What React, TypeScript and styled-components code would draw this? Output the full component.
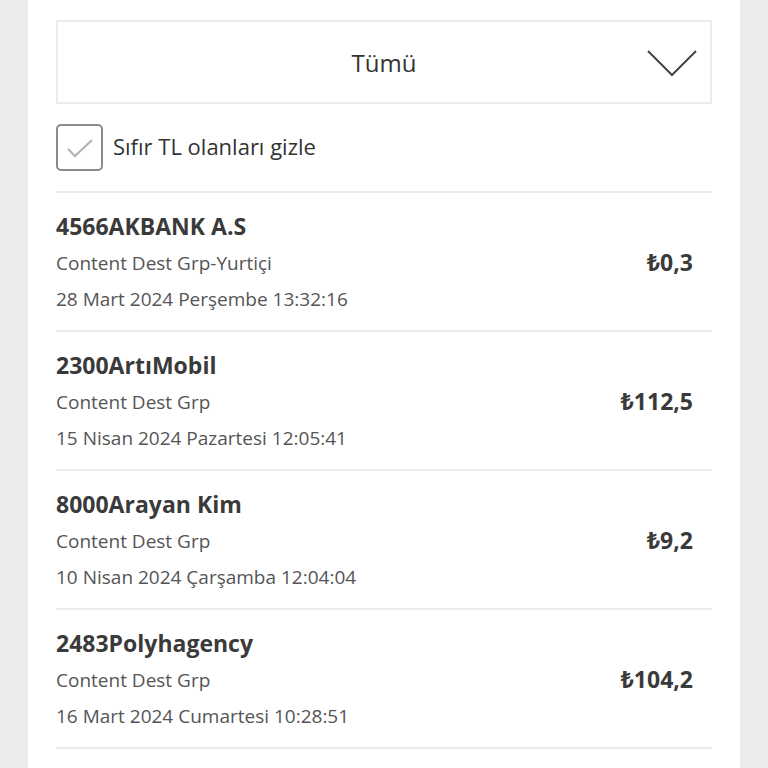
import React from "react";
import styled, { createGlobalStyle } from "styled-components";

const Global = createGlobalStyle`
  html, body { margin: 0; padding: 0; background: #ebebeb; }
  body { font-family: "Open Sans", "Noto Sans", sans-serif; }
`;

const Page = styled.div`
  padding: 0 28px;
`;

const Card = styled.div`
  background: #ffffff;
  padding: 20px 28px 40px;
  min-height: 800px;
`;

const Select = styled.div`
  height: 84px;
  box-sizing: border-box;
  border: 2px solid #ececec;
  display: flex;
  align-items: center;
  justify-content: center;
  position: relative;
  font-size: 24px;
  color: #333;
`;

const Chevron = styled.svg`
  position: absolute;
  right: 13px;
  top: 28px;
`;

const CheckRow = styled.label`
  display: flex;
  align-items: center;
  gap: 10px;
  margin-top: 20px;
  height: 47px;
  font-size: 22px;
  color: #333;
`;

const CheckText = styled.span`
  margin-top: -3px;
`;

const Box = styled.div`
  width: 47px;
  height: 47px;
  box-sizing: border-box;
  border: 2px solid #8a8a8a;
  border-radius: 5px;
  display: flex;
  align-items: center;
  justify-content: center;
`;

const List = styled.div`
  margin-top: 20px;
  border-top: 2px solid #ececec;
`;

const Row = styled.div`
  display: flex;
  align-items: center;
  justify-content: space-between;
  padding: 14px 19px 13px 0;
  border-bottom: 2px solid #ececec;
`;

const Info = styled.div`
  display: flex;
  flex-direction: column;
`;

const Title = styled.div`
  font-size: 23px;
  font-weight: 700;
  color: #3a3a3a;
  line-height: 38px;
`;

const Sub = styled.div`
  font-size: 19px;
  color: #555;
  line-height: 36px;
`;

const Amount = styled.div`
  font-size: 23px;
  font-weight: 700;
  color: #3a3a3a;
  margin-top: 0;
`;

const rows = [
  { t: "4566AKBANK A.S", s: "Content Dest Grp-Yurtiçi", d: "28 Mart 2024 Perşembe 13:32:16", a: "₺0,3" },
  { t: "2300ArtıMobil", s: "Content Dest Grp", d: "15 Nisan 2024 Pazartesi 12:05:41", a: "₺112,5" },
  { t: "8000Arayan Kim", s: "Content Dest Grp", d: "10 Nisan 2024 Çarşamba 12:04:04", a: "₺9,2" },
  { t: "2483Polyhagency", s: "Content Dest Grp", d: "16 Mart 2024 Cumartesi 10:28:51", a: "₺104,2" },
];

export default function App() {
  return (
    <>
      <Global />
      <Page>
        <Card>
          <Select>
            Tümü
            <Chevron width="50" height="27" viewBox="0 0 50 27">
              <polyline points="1,1 25,25 49,1" fill="none" stroke="#444" strokeWidth="2" />
            </Chevron>
          </Select>
          <CheckRow>
            <Box>
              <svg width="28" height="22" viewBox="0 0 28 22">
                <polyline points="2,12 9,19 26,3" fill="none" stroke="#b0b0b0" strokeWidth="2" />
              </svg>
            </Box>
            <CheckText>Sıfır TL olanları gizle</CheckText>
          </CheckRow>
          <List>
            {rows.map((r) => (
              <Row key={r.t}>
                <Info>
                  <Title>{r.t}</Title>
                  <Sub>{r.s}</Sub>
                  <Sub>{r.d}</Sub>
                </Info>
                <Amount>{r.a}</Amount>
              </Row>
            ))}
          </List>
        </Card>
      </Page>
    </>
  );
}
